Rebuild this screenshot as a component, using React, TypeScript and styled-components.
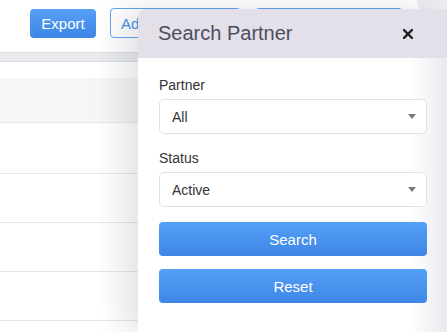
import styled, { createGlobalStyle } from "styled-components";

const GlobalStyle = createGlobalStyle`
  html, body {
    margin: 0;
    padding: 0;
    background: #ffffff;
    font-family: "Liberation Sans", Arial, sans-serif;
  }
`;

const Screen = styled.div`
  position: relative;
  width: 447px;
  height: 332px;
  overflow: hidden;
  background: #ffffff;
`;

const Toolbar = styled.div`
  display: flex;
  align-items: flex-start;
  gap: 14px;
  height: 52px;
  padding: 9px 0 0 30px;
  box-sizing: border-box;
`;

const PrimaryButton = styled.button`
  height: 29px;
  width: 66px;
  padding: 0;
  border: none;
  border-radius: 4px;
  background: linear-gradient(180deg, #55a0f7 0%, #3d85e6 100%);
  color: #ffffff;
  font-family: inherit;
  font-size: 15px;
  flex-shrink: 0;
`;

const OutlineButton = styled.button<{ $width: number }>`
  width: ${(p) => p.$width}px;
  height: 30px;
  margin-top: -1px;
  padding: 0 10px;
  border: 1px solid #63a3ef;
  border-radius: 4px;
  background: #ffffff;
  color: #4a90e8;
  font-family: inherit;
  font-size: 15px;
  text-align: left;
  flex-shrink: 0;
`;

const Avatar = styled.div`
  width: 44px;
  height: 44px;
  margin-top: -33px;
  border-radius: 50%;
  background: #eceef1;
  flex-shrink: 0;
`;

const Table = styled.div`
  display: flex;
  flex-direction: column;
`;

const HeadRow = styled.div`
  height: 8px;
  background: #e9ebee;
  border-top: 1px solid #dcdfe4;
  border-bottom: 1px solid #dcdfe4;
`;

const Row = styled.div<{ $h: number; $shade?: boolean }>`
  height: ${(p) => p.$h}px;
  background: ${(p) => (p.$shade ? "#f6f6f5" : "#ffffff")};
  border-bottom: 1px solid #e6e7ea;
`;

const Spacer = styled.div`
  height: 16px;
  background: #ffffff;
`;

const Drawer = styled.aside`
  position: absolute;
  top: 9px;
  left: 138px;
  width: 309px;
  bottom: 0;
  display: flex;
  flex-direction: column;
  border-top-left-radius: 8px;
  overflow: hidden;
  box-shadow: -16px 0 30px rgba(40, 50, 70, 0.13);
`;

const DrawerHeader = styled.div`
  height: 49px;
  flex-shrink: 0;
  display: flex;
  align-items: center;
  justify-content: space-between;
  padding: 0 34px 0 20px;
  background: #e3e0ea;
`;

const Title = styled.h2`
  margin: 0;
  font-size: 20px;
  font-weight: 400;
  color: #4d4d5d;
`;

const CloseButton = styled.span`
  display: flex;
  align-items: center;
  cursor: pointer;
`;

const DrawerBody = styled.div`
  flex: 1;
  display: flex;
  flex-direction: column;
  padding: 19px 20px 0 21px;
  background: linear-gradient(90deg, #ffffff 0%, #ffffff 88%, #e8eaee 100%);
`;

const Field = styled.div<{ $gap: number }>`
  display: flex;
  flex-direction: column;
  margin-bottom: ${(p) => p.$gap}px;
`;

const Label = styled.div`
  font-size: 14px;
  color: #333333;
  line-height: 16px;
  margin-bottom: 6px;
`;

const Select = styled.div`
  height: 35px;
  box-sizing: border-box;
  border: 1px solid #dfe1e6;
  border-radius: 5px;
  background: #ffffff;
  display: flex;
  align-items: center;
  justify-content: space-between;
  padding: 0 10px 0 12px;
  font-size: 14px;
  color: #333333;
`;

const Caret = styled.span`
  width: 0;
  height: 0;
  border-left: 4px solid transparent;
  border-right: 4px solid transparent;
  border-top: 5px solid #7a7a7a;
`;

const BlockButton = styled.button`
  height: 34px;
  border: none;
  border-radius: 4px;
  background: linear-gradient(180deg, #54a0f9 0%, #3f86e4 100%);
  color: #ffffff;
  font-family: inherit;
  font-size: 15px;
  margin-bottom: 13px;
`;

const App = () => {
  return (
    <Screen>
      <GlobalStyle />
      <Toolbar>
        <PrimaryButton>Export</PrimaryButton>
        <OutlineButton $width={131}>Add</OutlineButton>
        <OutlineButton $width={148} aria-label="Import" />
        <Avatar />
      </Toolbar>
      <Table>
        <HeadRow />
        <Spacer />
        <Row $h={44} $shade />
        <Row $h={50} />
        <Row $h={48} />
        <Row $h={48} />
        <Row $h={48} />
      </Table>

      <Drawer>
        <DrawerHeader>
          <Title>Search Partner</Title>
          <CloseButton>
            <svg width="10" height="10" viewBox="0 0 10 10">
              <path d="M1 1 L9 9 M9 1 L1 9" stroke="#1f1f24" strokeWidth="2.4" strokeLinecap="square" />
            </svg>
          </CloseButton>
        </DrawerHeader>
        <DrawerBody>
          <Field $gap={16}>
            <Label>Partner</Label>
            <Select>
              All
              <Caret />
            </Select>
          </Field>
          <Field $gap={15}>
            <Label>Status</Label>
            <Select>
              Active
              <Caret />
            </Select>
          </Field>
          <BlockButton>Search</BlockButton>
          <BlockButton>Reset</BlockButton>
        </DrawerBody>
      </Drawer>
    </Screen>
  );
};

export default App;
